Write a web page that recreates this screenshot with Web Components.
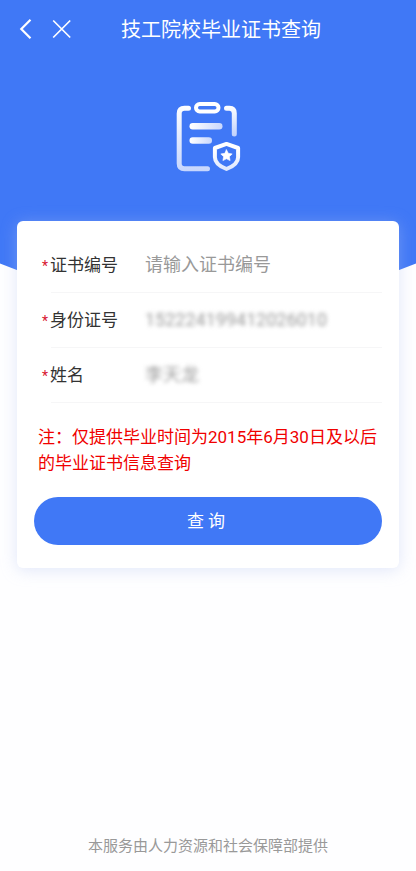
<!DOCTYPE html>
<html lang="zh-CN">
<head>
<meta charset="utf-8">
<meta name="viewport" content="width=device-width, initial-scale=1">
<title>技工院校毕业证书查询</title>
<style>
html, body { margin: 0; height: 100%; }
body { background: #fefeff; font-family: Roboto, "Noto Sans CJK SC", sans-serif; color: #333; }
</style>
</head>
<body>
<certificate-page>
  <nav-bar slot="bar">技工院校毕业证书查询</nav-bar>
  <clipboard-badge slot="art"></clipboard-badge>
  <query-card>
    <form-field name="certificate" label="证书编号" placeholder="请输入证书编号"></form-field>
    <form-field name="identity" label="身份证号" value="152224199412026010" masked></form-field>
    <form-field name="fullname" label="姓名" value="李天龙" masked></form-field>
    <span slot="note">注：仅提供毕业时间为2015年6月30日及以后的毕业证书信息查询</span>
    <pill-button slot="action">查 询</pill-button>
  </query-card>
  <span slot="footer">本服务由人力资源和社会保障部提供</span>
</certificate-page>
<script>
const define = (name, html, setup) => customElements.define(name, class extends HTMLElement {
  constructor() {
    super();
    this.attachShadow({ mode: 'open' }).innerHTML = html;
  }
  connectedCallback() { if (setup) setup(this, this.shadowRoot); }
});

define('certificate-page', `
<style>
  :host { display: grid; min-height: 100%; grid-template: auto 1fr auto / 1fr; }
  .hero { grid-area: 1 / 1 / 3 / 2; height: 305px; background: #4078f6;
    clip-path: ellipse(131% 547px at 50% -242px); }
  header { grid-area: 1 / 1; z-index: 1; height: 221px; display: flex; flex-direction: column; }
  .art { flex: 1; display: flex; justify-content: center; align-items: flex-start; padding-top: 38px; }
  main { grid-area: 2 / 1; z-index: 1; padding: 0 17px; }
  footer { grid-area: 3 / 1; text-align: center; font-size: 15px; line-height: 20px; color: #999; padding: 16px 16px 15px; }
</style>
<div class="hero"></div>
<header><slot name="bar"></slot><div class="art"><slot name="art"></slot></div></header>
<main><slot></slot></main>
<footer><slot name="footer"></slot></footer>`);

define('nav-bar', `
<style>
  :host { display: block; color: #fff; }
  nav { display: flex; align-items: center; height: 60px; padding: 0 16px; }
  button { all: unset; width: 20px; height: 26px; display: grid; align-items: start; cursor: pointer; margin-right: 16px; }
  svg { display: block; fill: none; stroke: #fff; }
  h1 { margin: 0 0 0 33px; font-size: 20px; font-weight: 400; line-height: 28px; white-space: nowrap; }
</style>
<nav>
  <button type="button" aria-label="返回"><svg width="20" height="24" viewBox="0 0 20 24" stroke-width="2.200"><path d="M14.500 2.800 5.300 12l9.200 9.200"/></svg></button>
  <button type="button" aria-label="关闭"><svg width="20" height="24" viewBox="0 0 20 24" stroke-width="1.700"><path d="M1.200 3.500 18.200 20.500M18.200 3.500 1.200 20.500"/></svg></button>
  <h1><slot></slot></h1>
</nav>`);

define('clipboard-badge', `
<style>:host, svg { display: block; }</style>
<svg width="68" height="76" viewBox="174 98 68 76" fill="none" stroke-linecap="round" stroke-linejoin="round" aria-hidden="true">
  <defs>
    <linearGradient id="v" gradientUnits="userSpaceOnUse" x1="0" y1="104" x2="0" y2="172"><stop offset="0" stop-color="#fff"/><stop offset="1" stop-color="#c5d5fd"/></linearGradient>
    <linearGradient id="s" gradientUnits="userSpaceOnUse" x1="0" y1="150" x2="0" y2="172"><stop offset="0" stop-color="#fff"/><stop offset="1" stop-color="#dbe5fe"/></linearGradient>
    <linearGradient id="r" gradientUnits="userSpaceOnUse" x1="0" y1="106" x2="0" y2="137"><stop offset="0" stop-color="#fff"/><stop offset="1" stop-color="#bfd0fc"/></linearGradient>
    <linearGradient id="h" gradientUnits="userSpaceOnUse" x1="190" y1="0" x2="222" y2="0"><stop offset="0" stop-color="#fff"/><stop offset="1" stop-color="#c9d8fd"/></linearGradient>
    <linearGradient id="k" gradientUnits="userSpaceOnUse" x1="190" y1="0" x2="212" y2="0"><stop offset="0" stop-color="#fff"/><stop offset="1" stop-color="#c9d8fd"/></linearGradient>
  </defs>
  <path d="M188.500 108.300H184.500Q179.200 108.300 179.200 113.600V163.500Q179.200 168.800 184.500 168.800H207.500" stroke="url(#v)" stroke-width="5"/>
  <path d="M226.500 108.300H229.500Q234.300 108.300 234.300 113.300V134" stroke="url(#r)" stroke-width="5"/>
  <rect x="196" y="104" width="22.500" height="7.500" rx="3.700" stroke="#fff" stroke-width="4"/>
  <rect x="189.500" y="123" width="33" height="6.500" rx="3.250" fill="url(#h)"/>
  <rect x="189.500" y="137.300" width="22.500" height="6.500" rx="3.250" fill="url(#k)"/>
  <path d="M226.500 143.900 238.100 148V157.200Q238.100 164.500 226.500 169Q214.900 164.500 214.900 157.200V148Z" stroke="url(#s)" stroke-width="4"/>
  <path d="m226.500 149.800 1.800 3.500 3.900.6-2.800 2.800.7 3.900-3.600-1.800-3.600 1.800.7-3.900-2.800-2.800 3.900-.6Z" fill="#fff" stroke="#fff" stroke-width=".6"/>
</svg>`);

define('query-card', `
<style>
  :host { display: block; background: #fff; border-radius: 6px; padding: 17px 17px 23px;
    box-shadow: 0 2px 16px rgba(180, 195, 240, .4); }
  form { margin: 0; }
  p { margin: 0; padding: 21px 4px; font-size: 17px; line-height: 26px; color: #f00000; }
</style>
<form onsubmit="return false">
  <slot></slot>
  <p><slot name="note"></slot></p>
  <slot name="action"></slot>
</form>`);

define('form-field', `
<style>
  :host { display: block; padding-left: 8px; }
  .row { display: flex; align-items: center; margin-left: 9px; height: 54px; border-bottom: 1px solid #f6f6f7; }
  label { width: 94px; flex: none; box-sizing: content-box; margin-left: -9px; padding-right: 9px; font-size: 17px; line-height: 26px; white-space: nowrap; color: #333; }
  i { display: inline-block; width: 8px; font-style: normal; font-size: 14px; color: #d8142f; }
  input { flex: 1; min-width: 0; border: 0; outline: 0; padding: 0; background: none; font: 18px/26px Roboto, "Noto Sans CJK SC", sans-serif; color: #333; }
  input::placeholder { color: #999; opacity: 1; }
  :host([masked]) input { filter: blur(2px); color: #999; }
</style>
<div class="row"><label for="f"><i>*</i><span></span></label><input id="f" type="text"></div>`,
(host, root) => {
  root.querySelector('span').textContent = host.getAttribute('label');
  const input = root.querySelector('input');
  input.name = host.getAttribute('name');
  input.placeholder = host.getAttribute('placeholder') || '';
  input.value = host.getAttribute('value') || '';
});

define('pill-button', `
<style>
  :host { display: block; }
  button { display: block; width: 100%; height: 48px; border: 0; padding: 0 4px 0 0; border-radius: 24px; background: #4078f6; color: #fff;
    font: 17px/24px Roboto, "Noto Sans CJK SC", sans-serif; white-space: pre; cursor: pointer; }
</style>
<button type="submit"><slot></slot></button>`);
</script>
</body>
</html>
